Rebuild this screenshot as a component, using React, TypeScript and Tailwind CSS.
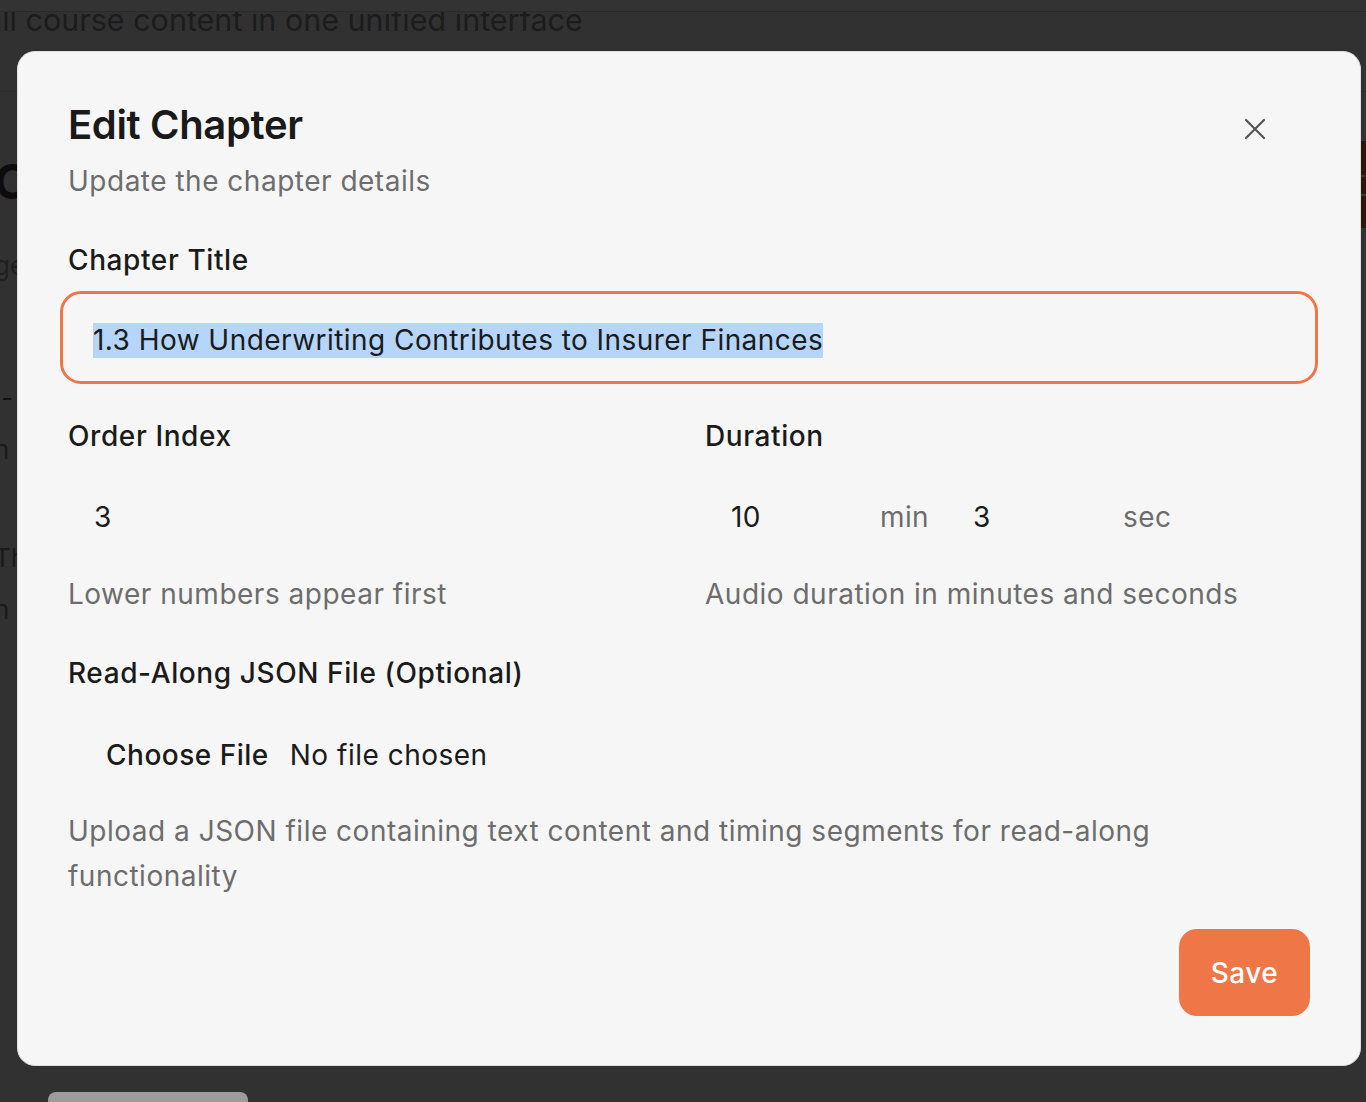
import React from 'react';

const font = { fontFamily: 'Inter, "Noto Sans", sans-serif' };

const Label = ({ children }: { children: React.ReactNode }) => (
  <div className="text-[28px] leading-[40px] font-medium text-[#1b1b1b] tracking-[0.6px]">{children}</div>
);

const Help = ({ children }: { children: React.ReactNode }) => (
  <p className="text-[28px] leading-[45px] text-[#6d6d6d] tracking-[0.5px]">{children}</p>
);

// page behind the dialog, darkened by the overlay
const BackgroundPage = () => (
  <div className="h-[1102px] overflow-hidden bg-[#313131]">
    <div className="h-[12px] bg-[#333333] border-b border-[#2a2a2a]" />
    <div className="h-[80px] overflow-hidden border-b border-[#2b2b2b]">
      <div className="-mt-[12px] -ml-[15px] text-[30.5px] leading-[40px] text-[#1c1c1c] whitespace-nowrap">
        all course content in one unified interface
      </div>
    </div>
    <div className="flex justify-between">
      <div className="-ml-[6px] flex flex-col">
        <div className="mt-[62px] text-[48px] leading-[56px] font-bold text-[#0c0c0c]">Co</div>
        <div className="mt-[40px] text-[26px] leading-[32px] text-[#1f1f1f]">ge</div>
        <div className="mt-[100px] text-[26px] leading-[32px] text-[#111]">&nbsp;-</div>
        <div className="mt-[20px] text-[26px] leading-[32px] text-[#1a1a1a]">n</div>
        <div className="mt-[76px] text-[26px] leading-[32px] text-[#1a1a1a]">Th</div>
        <div className="mt-[20px] text-[26px] leading-[32px] text-[#1a1a1a]">h</div>
      </div>
      <div className="mt-[49px] w-[30px] h-[87px] bg-[#2b150c] flex flex-col">
        <div className="mt-[34px] h-[2px] bg-[#3a3a3a]" />
        <div className="mt-[17px] h-[2px] bg-[#3a3a3a]" />
      </div>
    </div>
  </div>
);

export default function App() {
  return (
    <div className="relative w-[1366px] h-[1102px] overflow-hidden" style={font}>
      <BackgroundPage />
      {/* toast / tab peeking at the bottom */}
      <div className="absolute left-[48px] top-[1092px] w-[200px] h-[30px] rounded-[8px] bg-[#9c9c9c]" />

      {/* dialog */}
      <div className="absolute left-[17px] top-[51px] w-[1344px] h-[1015px] rounded-[18px] bg-[#f6f6f6] border border-[#dedede] px-[50px] pt-[49px]">
        <button className="absolute right-[92px] top-[64px] w-[26px] h-[26px] flex items-center justify-center text-[#555]">
          <svg width="22" height="22" viewBox="0 0 22 22" fill="none" stroke="currentColor" strokeWidth="2.2" strokeLinecap="round">
            <path d="M2 2 L20 20 M20 2 L2 20" />
          </svg>
        </button>

        <h2 className="text-[40px] leading-[48px] font-semibold text-[#1a1a1a] tracking-[-0.35px]">Edit Chapter</h2>
        <p className="mt-[12px] text-[28px] leading-[40px] text-[#6d6d6d] tracking-[0.5px]">Update the chapter details</p>

        <div className="mt-[39px]">
          <Label>Chapter Title</Label>
          <div className="mt-[19px] h-[77px] rounded-[13px] outline-[3px] outline-solid outline-[#ee7647] outline-offset-[5px] flex items-center pt-[6px] px-[25px]">
            <span className="bg-[#b6d5fa] text-[28px] leading-[35px] text-[#1b1b1b] tracking-[0.45px]">
              1.3 How Underwriting Contributes to Insurer Finances
            </span>
          </div>
        </div>

        <div className="mt-[40px] grid grid-cols-2 gap-x-[32px]">
          <div>
            <Label>Order Index</Label>
            <div className="mt-[22px] h-[77px] flex items-center px-[26px] text-[28px] text-[#1b1b1b]">3</div>
            <div className="mt-[17px]">
              <Help>Lower numbers appear first</Help>
            </div>
          </div>
          <div>
            <Label>Duration</Label>
            <div className="mt-[22px] h-[77px] flex items-center text-[28px] tracking-[0.4px]">
              <div className="w-[155px] px-[26px] text-[#1b1b1b]">10</div>
              <span className="ml-[20px] text-[#6d6d6d]">min</span>
              <div className="ml-[18px] w-[156px] px-[26px] text-[#1b1b1b]">3</div>
              <span className="ml-[20px] text-[#6d6d6d]">sec</span>
            </div>
            <div className="mt-[17px]">
              <Help>Audio duration in minutes and seconds</Help>
            </div>
          </div>
        </div>

        <div className="mt-[36px]">
          <Label>Read-Along JSON File (Optional)</Label>
          <div className="mt-[23px] h-[77px] flex items-center text-[28px] text-[#1b1b1b] tracking-[0.5px]">
            <span className="ml-[38px] font-medium">Choose File</span>
            <span className="ml-[21px]">No file chosen</span>
          </div>
          <div className="mt-[16px]">
            <Help>Upload a JSON file containing text content and timing segments for read-along functionality</Help>
          </div>
        </div>

        <div className="mt-[30px] flex justify-end">
          <button className="w-[131px] h-[87px] rounded-[18px] bg-[#ee7647] text-white text-[28px] font-medium tracking-[0.5px]">Save</button>
        </div>
      </div>
    </div>
  );
}
